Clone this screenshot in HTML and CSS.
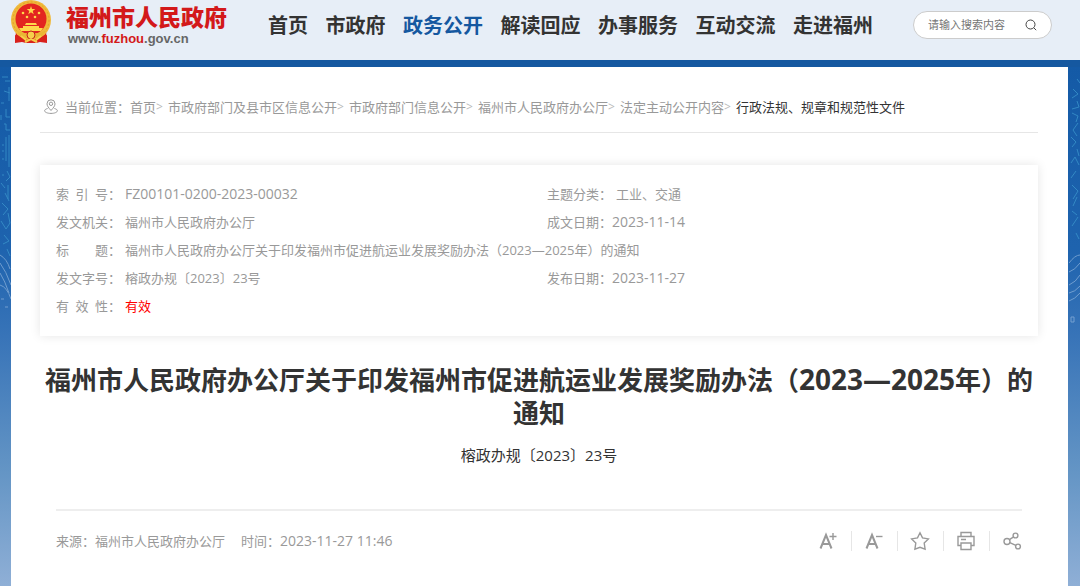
FILE: index.html
```
<!DOCTYPE html>
<html lang="zh-CN">
<head>
  <meta charset="UTF-8">
  <meta name="viewport" content="width=device-width, initial-scale=1.0">
  <title>福州市人民政府办公厅关于印发福州市促进航运业发展奖励办法（2023—2025年）的通知</title>
  <link rel="stylesheet" href="styles.css">
</head>
<body>
  <!-- Header -->
  <header class="header">
    <a class="logo" href="#">
      <svg class="emblem" viewBox="0 0 42 44" aria-hidden="true">
        <path d="M6 31l-1 11 7-1 5 2h8l5-2 7 1-1-11z" fill="#d9201c"/>
        <circle cx="21" cy="20" r="20" fill="#f0b93a"/>
        <circle cx="21" cy="20" r="18" fill="none" stroke="#e0a32c" stroke-dasharray="2 2"/>
        <circle cx="21" cy="19" r="15.500" fill="#e32520"/>
        <path d="M21 6l1 3h3.300l-2.600 2 1 3.200-2.700-2-2.700 2 1-3.200-2.600-2H20z" fill="#ffd84a"/>
        <g fill="#ffd84a">
          <circle cx="13" cy="13" r="1.300"/><circle cx="29" cy="13" r="1.300"/>
          <circle cx="17" cy="17" r="1.300"/><circle cx="25" cy="17" r="1.300"/>
          <path d="M16 23h10l1 2H15zM13 26h16v2H13zM9 28h24l-2 3H11z"/>
        </g>
        <path d="M7 31q14 5 28 0l-3 5q-11 5-22 0z" fill="#eab534"/>
        <path d="M5 35l8 3 3 5-4-1-7 1zM37 35l-8 3-3 5 4-1 7 1z" fill="#d9201c"/>
        <circle cx="21" cy="35" r="4" fill="#f6cf4c" stroke="#c9201b"/>
        <path d="M11 36l5 4M31 36l-5 4M15 42l6-3 6 3" stroke="#f6cf4c" stroke-width="2" fill="none"/>
      </svg>
      <span class="logo-text">
        <span class="site-name">福州市人民政府</span>
        <span class="site-url">www.<em>fuzhou</em>.gov.cn</span>
      </span>
    </a>
    <nav class="nav">
      <a href="#">首页</a>
      <a href="#">市政府</a>
      <a href="#" class="active">政务公开</a>
      <a href="#">解读回应</a>
      <a href="#">办事服务</a>
      <a href="#">互动交流</a>
      <a href="#">走进福州</a>
    </nav>
    <form class="search">
      <input type="text" placeholder="请输入搜索内容" aria-label="搜索">
      <button type="button" aria-label="搜索">
        <svg viewBox="0 0 12 12"><circle cx="5.500" cy="5.500" r="4.500"/><path d="M8.800 8.800l2.400 2.400"/></svg>
      </button>
    </form>
  </header>

  <div class="page">
    <!-- Faint city / wave line drawing on both sides -->
    <svg class="texture left" viewBox="0 0 11 300" preserveAspectRatio="none" aria-hidden="true">
      <path d="M2 10h6M5 14h5M9 20v14M4 24l6 2M1 36h3M6 42v8h4M1 48v5M4 57h2v6h4M6 70v24M9 68v32M2 78h2M2 84h2M2 92h2M7 104l3 6-4 4M2 108h2M1 116l4 5M8 118v14M5 126l4 8M2 136l6 6-5 6M8 146l2 10-4 6M1 154l5 8M4 168l5 6-6 3M7 182l3 7"/>
      <path class="pale" d="M0 188q7 4 10 14M0 196q6 8 11 22M0 206q5 8 9 20M0 218q7 2 11 14M1 232h3M5 240h3"/>
    </svg>
    <svg class="texture right" viewBox="0 0 11 300" preserveAspectRatio="none" aria-hidden="true">
      <path d="M8 12l3 4M4 22l5 5-6 4M8 34l2 6-7 2M3 46l6 3-2 6M9 56l-5 7 4 6M2 70l5 5-4 5M8 82l2 7M2 96l4-6 4 8M7 104l-5 7M3 118l6 6-5 8M8 130l-4 9M3 144l5 4M9 150l-6 9M7 166l3 6"/>
      <path class="pale" d="M0 196q6-8 11-8M0 205q6-2 11-9M0 218q7-3 11-10M0 226q6-1 11-7M0 234q6-2 11-8M2 250h3v5h-3z"/>
    </svg>

    <main class="content">
      <!-- Breadcrumb -->
      <nav class="crumbs">
        <svg class="pin" viewBox="0 0 14 15" aria-hidden="true">
          <path d="M7 11.500C4.500 8.700 3 6.800 3 4.800a4 4 0 0 1 8 0c0 2-1.500 3.900-4 6.700z"/>
          <circle cx="7" cy="4.800" r="1.700"/>
          <path d="M3.600 9.500C1.700 10 .6 10.800.6 11.700c0 1.500 2.800 2.700 6.400 2.700s6.400-1.200 6.400-2.700c0-.9-1.100-1.700-3-2.200"/>
        </svg>
        <span>当前位置：</span>
        <a href="#">首页</a><i>&gt;</i>
        <a href="#">市政府部门及县市区信息公开</a><i>&gt;</i>
        <a href="#">市政府部门信息公开</a><i>&gt;</i>
        <a href="#">福州市人民政府办公厅</a><i>&gt;</i>
        <a href="#">法定主动公开内容</a><i>&gt;</i>
        <a href="#" class="current">行政法规、规章和规范性文件</a>
      </nav>

      <!-- Document info -->
      <dl class="info">
        <div><dt><span>索 引 号</span>：</dt><dd class="num">FZ00101-0200-2023-00032</dd></div>
        <div><dt><span>主题分类</span>：</dt><dd>工业、交通</dd></div>
        <div><dt><span>发文机关</span>：</dt><dd>福州市人民政府办公厅</dd></div>
        <div class="date"><dt><span>成文日期</span>：</dt><dd class="num">2023-11-14</dd></div>
        <div class="wide"><dt><span>标 题</span>：</dt><dd>福州市人民政府办公厅关于印发福州市促进航运业发展奖励办法（2023—2025年）的通知</dd></div>
        <div><dt><span>发文字号</span>：</dt><dd>榕政办规〔2023〕23号</dd></div>
        <div class="date"><dt><span>发布日期</span>：</dt><dd class="num">2023-11-27</dd></div>
        <div class="wide"><dt><span>有 效 性</span>：</dt><dd class="valid">有效</dd></div>
      </dl>

      <!-- Article heading -->
      <h1>福州市人民政府办公厅关于印发福州市促进航运业发展奖励办法（<span>2023—2025</span>年）的通知</h1>
      <p class="doc-no">榕政办规〔2023〕23号</p>

      <div class="meta">
        <span>来源：福州市人民政府办公厅</span>
        <span>时间：<time class="num">2023-11-27 11:46</time></span>
        <div class="tools">
          <button type="button" aria-label="放大字体">
            <svg viewBox="0 0 20 20"><path class="bold" d="M2.500 17.500L8 4l5.500 13.500M4.500 13h7"/><path d="M11.500 5.500h7M15 2v7"/></svg>
          </button>
          <button type="button" aria-label="缩小字体">
            <svg viewBox="0 0 20 20"><path class="bold" d="M2.500 17.500L8 4l5.500 13.500M4.500 13h7"/><path d="M12 5.500h6.500"/></svg>
          </button>
          <button type="button" aria-label="收藏">
            <svg viewBox="0 0 20 20"><path d="M10 1.800l2.500 5.100 5.900 1-4.200 4.200.9 6L10 16.300l-5.100 1.800.9-6L1.600 7.900l5.900-1z"/></svg>
          </button>
          <button type="button" aria-label="打印">
            <svg viewBox="0 0 20 20"><path d="M5 5.500v-4h10v4M5 14.500H2v-9h16v9h-3M5 12h10v6.500H5zM5 8.500h5"/></svg>
          </button>
          <button type="button" aria-label="分享">
            <svg viewBox="0 0 20 20"><circle cx="5" cy="10.500" r="3"/><circle cx="13.500" cy="4.500" r="2.400"/><circle cx="16" cy="15.500" r="2.400"/><path d="M7.400 8.700l4.200-2.900M7.800 11.700l6 2.700"/></svg>
          </button>
        </div>
      </div>
    </main>
  </div>
</body>
</html>
```
FILE: styles.css
```
:root {
  --blue: #1558a0;
  --text: #333;
  --gray: #999;
  --line: #e6e6e6;
}
* {
  box-sizing: border-box;
}
body {
  display: flex;
  flex-direction: column;
  min-height: 100vh;
  margin: 0;
  color: var(--gray);
  font: 13px/28px "Open Sans", "Noto Sans CJK SC", sans-serif;
}
a {
  color: inherit;
  text-decoration: none;
}
button {
  padding: 0;
  border: 0;
  background: none;
  cursor: pointer;
}
svg {
  display: block;
  fill: none;
  stroke: currentColor;
}

/* Header */
.header {
  display: flex;
  align-items: flex-start;
  height: 60px;
  padding: 0 28px 0 10px;
  background: #e7eef7;
}
.logo {
  display: flex;
  gap: 14px;
  width: 218px;
}
.emblem {
  flex: none;
  width: 42px;
  height: 44px;
  stroke: none;
}
.logo-text {
  display: flex;
  flex-direction: column;
  padding-top: 4px;
  white-space: nowrap;
}
.site-name {
  color: #d3191a;
  font-size: 23px;
  font-weight: 900;
  line-height: 26px;
}
.site-url {
  padding-left: 2px;
  color: #666;
  font: bold 13px/18px "Liberation Sans", Arial, sans-serif;
}
.site-url em {
  color: #d3191a;
  font-style: normal;
}
.nav {
  display: flex;
  flex: 1;
  justify-content: space-between;
  margin: 0 40px;
  color: var(--text);
  font-size: 20px;
  font-weight: bold;
  line-height: 52px;
  white-space: nowrap;
}
.nav .active {
  color: var(--blue);
}
.search {
  display: flex;
  align-items: center;
  width: 139px;
  height: 28px;
  margin-top: 11px;
  padding: 0 14px;
  border: 1px solid #ccc;
  border-radius: 14px;
  background: #fff;
}
.search input {
  flex: 1;
  min-width: 0;
  padding: 0;
  border: 0;
  outline: 0;
  background: none;
  color: var(--text);
  font: inherit;
  font-size: 11px;
}
.search input::placeholder {
  color: #757575;
}
.search svg {
  width: 12px;
  height: 12px;
  color: #444;
}

/* Page background and white sheet */
.page {
  position: relative;
  display: flex;
  flex: 1;
  padding: 0 12px 0 11px;
  border-top: 7px solid var(--blue);
  background: linear-gradient(#145aa6, #1e63ae 35%, #3874b8 52%, #6495c5 78%, #8fafd6);
}
.texture {
  position: absolute;
  top: 0;
  width: 11px;
  height: 300px;
  color: #3f9bd0;
  opacity: 0.7;
}
.texture .pale {
  stroke: #8fb4dc;
}
.texture.left {
  left: 0;
}
.texture.right {
  right: 0;
}
.content {
  flex: 1;
  padding: 0 30px 0 29px;
  background: #fff;
}

/* Breadcrumb */
.crumbs {
  display: flex;
  align-items: center;
  height: 66px;
  padding: 14px 4px 0;
  border-bottom: 1px solid var(--line);
  white-space: nowrap;
}
.crumbs .pin {
  width: 14px;
  height: 15px;
  margin-right: 7px;
}
.crumbs i {
  width: 12px;
  color: #bbb;
  font-size: 12px;
  font-style: normal;
}
.crumbs .current {
  color: var(--text);
}

/* Document info */
.info {
  display: grid;
  grid-template-columns: 1fr 475px;
  margin: 32px 0 27px;
  padding: 15px 16px 16px;
  box-shadow: 0 0 10px rgba(0, 0, 0, 0.1);
}
.info div {
  display: flex;
  gap: 4px;
}
.info .wide {
  grid-column: 1 / 3;
}
.info .date {
  gap: 0;
}
.info dt {
  display: flex;
  flex: none;
  width: 65px;
  white-space: nowrap;
}
.info dt span {
  flex: none;
  width: 52px;
  text-align: justify;
  text-align-last: justify;
}
.info dd {
  margin: 0;
}
.info .valid {
  color: #f00;
}
.num {
  font-size: 14px;
}

/* Article heading */
h1 {
  margin: 0;
  color: var(--text);
  font-size: 26px;
  line-height: 33px;
  text-align: center;
}
h1 span {
  font-size: 28px;
}
.doc-no {
  margin: 11px 0 40px;
  color: var(--text);
  font-size: 15px;
  text-align: center;
}
.meta {
  display: flex;
  align-items: center;
  gap: 16px;
  margin: 0 16px;
  padding: 16px 0;
  border-top: 2px solid #eee;
}
.tools {
  display: flex;
  margin-left: auto;
}
.tools button {
  padding: 0 13px 0 12px;
  border-left: 1px solid var(--line);
  color: var(--gray);
}
.tools button:first-child {
  border-left: 0;
}
.tools button:last-child {
  padding-right: 0;
}
.tools svg {
  width: 20px;
  height: 20px;
  stroke-width: 1.4;
}
.tools .bold {
  stroke-width: 2;
}
```
